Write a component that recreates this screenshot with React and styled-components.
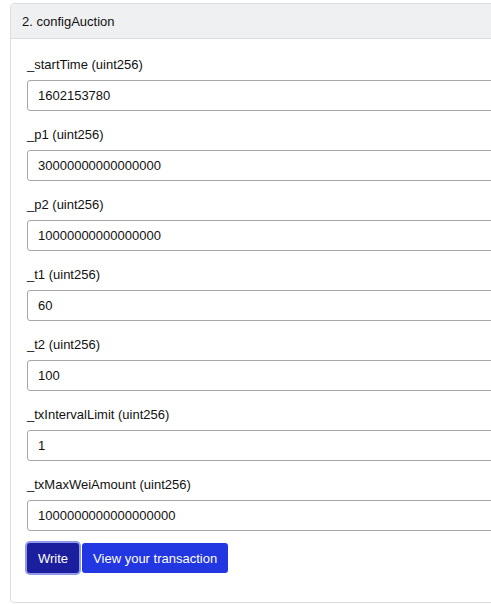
import React from 'react';
import styled, { createGlobalStyle } from 'styled-components';

const GlobalStyle = createGlobalStyle`
  body {
    margin: 0;
    background: #ffffff;
    overflow: hidden;
    font-family: "Liberation Sans", Arial, Helvetica, sans-serif;
  }
`;

const Page = styled.div`
  width: 100vw;
  height: 100vh;
  overflow: hidden;
  padding: 3px 0 0 10px;
  box-sizing: border-box;
`;

const Card = styled.div`
  width: 560px;
  height: 600px;
  border: 1px solid #dcdde0;
  border-radius: 4px;
  background: #fff;
  box-sizing: border-box;
  overflow: hidden;
`;

const Header = styled.div`
  height: 34px;
  display: flex;
  align-items: center;
  padding: 0 11px;
  background: #eff0f2;
  border-bottom: 1px solid #dcdde0;
  font-size: 13px;
  color: #111;
`;

const Body = styled.div`
  padding: 16px 16px 0 16px;
  display: flex;
  flex-direction: column;
`;

const Field = styled.div`
  display: flex;
  flex-direction: column;
  margin-bottom: 14px;
`;

const Label = styled.label`
  font-size: 13px;
  line-height: 20px;
  color: #111;
  margin-bottom: 5px;
`;

const Input = styled.input`
  height: 31px;
  box-sizing: border-box;
  border: 1px solid #a4a7ae;
  border-radius: 3px;
  padding: 0 10px;
  font-family: inherit;
  font-size: 13px;
  color: #111;
  outline: none;
`;

const Actions = styled.div`
  display: flex;
  gap: 3px;
  margin-top: -2px;
`;

const Button = styled.button`
  height: 30px;
  padding: 0 11px;
  border: none;
  border-radius: 3px;
  font-family: inherit;
  font-size: 13px;
  color: #fff;
  background: ${({ $primary }) => ($primary ? '#1b1f9d' : '#2236e2')};
  box-shadow: ${({ $focused }) => ($focused ? '0 0 0 2px #8f9ae9' : 'none')};
  cursor: pointer;
`;

const fields = [
  { label: '_startTime (uint256)', value: '1602153780' },
  { label: '_p1 (uint256)', value: '30000000000000000' },
  { label: '_p2 (uint256)', value: '10000000000000000' },
  { label: '_t1 (uint256)', value: '60' },
  { label: '_t2 (uint256)', value: '100' },
  { label: '_txIntervalLimit (uint256)', value: '1' },
  { label: '_txMaxWeiAmount (uint256)', value: '1000000000000000000' },
];

const App = () => {
  return (
    <>
      <GlobalStyle />
      <Page>
        <Card>
          <Header>2. configAuction</Header>
          <Body>
            {fields.map(f => (
              <Field key={f.label}>
                <Label>{f.label}</Label>
                <Input defaultValue={f.value} />
              </Field>
            ))}
            <Actions>
              <Button $primary $focused>Write</Button>
              <Button>View your transaction</Button>
            </Actions>
          </Body>
        </Card>
      </Page>
    </>
  );
};

export default App;
